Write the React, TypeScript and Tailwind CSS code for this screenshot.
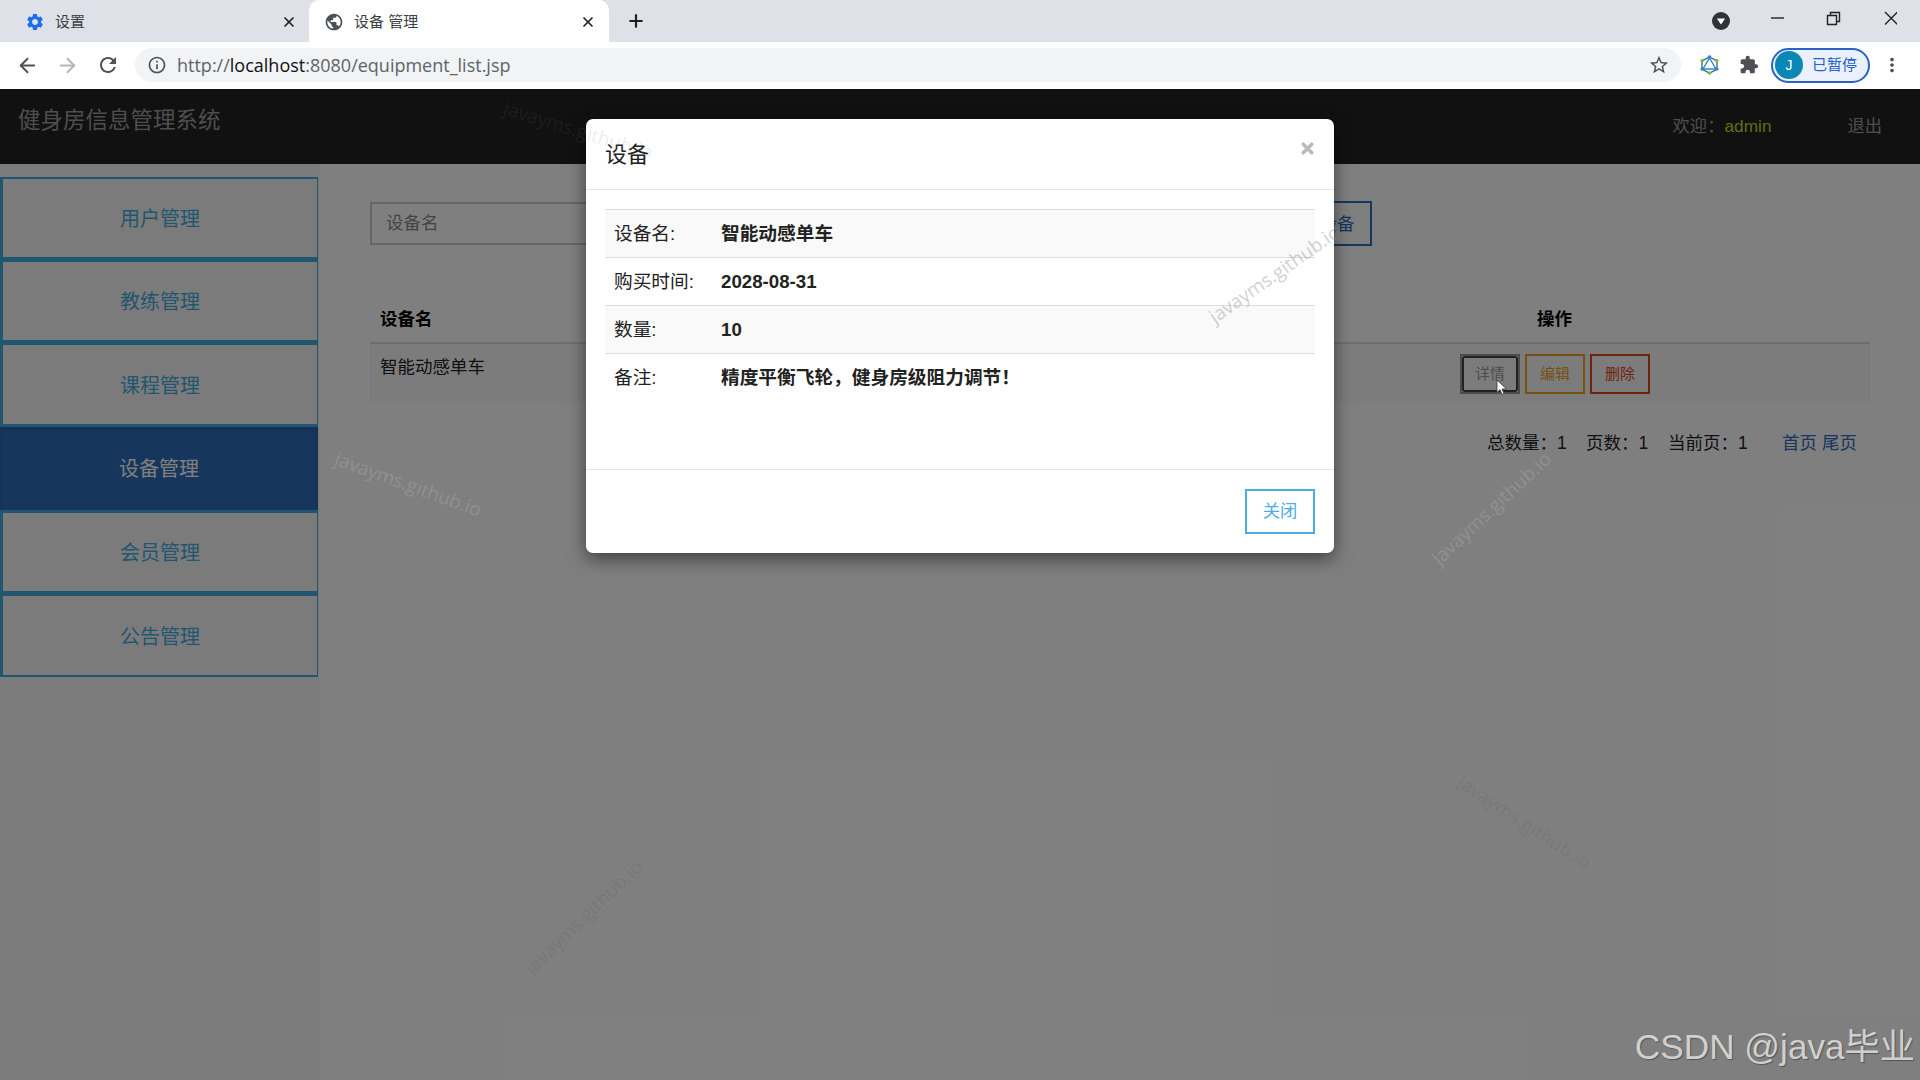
import { ReactNode } from 'react';
import { ArrowLeft, ArrowRight, Plus, X } from 'lucide-react';
import {
  MdExtension,
  MdMoreVert,
  MdOutlineInfo,
  MdOutlineStarBorder,
  MdPublic,
  MdRefresh,
  MdSettings,
} from 'react-icons/md';
import clsx from 'clsx';

const menu = [
  { label: '用户管理', className: 'h-[83px] border-t-2 border-b-3' },
  { label: '教练管理', className: 'h-[83px] border-t-2 border-b-3' },
  { label: '课程管理', className: 'h-[84px] border-t-2 border-b-3' },
  { label: '设备管理', active: true, className: 'h-[83px]' },
  { label: '会员管理', className: 'h-[84px] border-t-3 border-b-3' },
  { label: '公告管理', className: 'h-[83px] border-t-2 border-b-2' },
];

const details = [
  { label: '设备名:', value: '智能动感单车' },
  { label: '购买时间:', value: '2028-08-31' },
  { label: '数量:', value: '10' },
  { label: '备注:', value: '精度平衡飞轮，健身房级阻力调节！' },
];

const watermarks = [
  { className: 'left-[501px] top-[116px] rotate-[17deg] text-[#777]/15' },
  { className: 'left-[1197px] top-[260px] rotate-[-35deg] text-[#888]/40' },
  { className: 'left-[331px] top-[470px] rotate-[20deg] text-white/15' },
  { className: 'left-[1414px] top-[494px] rotate-[-43deg] text-white/15' },
  { className: 'left-[1447px] top-[808px] rotate-[33deg] text-black/8' },
  { className: 'left-[506px] top-[903px] rotate-[-44deg] text-black/8' },
];

function Tab({
  icon,
  title,
  active,
}: {
  icon: ReactNode;
  title: string;
  active?: boolean;
}) {
  return (
    <div
      className={clsx(
        'flex h-[42px] items-center pt-[2px] text-[15px] text-[#3c4043]',
        active
          ? 'w-[300px] rounded-t-[10px] bg-white pr-[13px] pl-4'
          : 'w-[309px] pr-[12px] pl-[26px]',
      )}
    >
      {icon}
      <span className="ml-[11px] flex-1">{title}</span>
      <X className="-mt-px h-4 w-4 text-[#202124]" strokeWidth={2.6} />
    </div>
  );
}

function ApiIcon() {
  return (
    <svg width="19" height="20" viewBox="0 0 19 20" fill="none">
      <path d="M9.5 2 17 6v8l-7.500 4.200L2 14V6z" stroke="#4a5f6e" strokeWidth="1.300" />
      <path d="M9.500 3 16 14H3z" stroke="#2f86d6" strokeWidth="1.400" />
      <g fill="#2f86d6">
        <circle cx="9.500" cy="2" r="1.800" />
        <circle cx="2.200" cy="14" r="1.800" />
        <circle cx="16.800" cy="14" r="1.800" />
      </g>
      <g fill="#6ac045">
        <circle cx="2.200" cy="5.800" r="1.800" />
        <circle cx="16.800" cy="5.800" r="1.800" />
        <circle cx="9.500" cy="18" r="1.800" />
      </g>
    </svg>
  );
}

function Browser() {
  return (
    <div className="h-[89px] bg-white">
      <div className="flex h-[42px] bg-[#dee1e7]">
        <Tab icon={<MdSettings className="-mx-px h-5 w-5 text-[#1a6ff0]" />} title="设置" />
        <Tab icon={<MdPublic className="-mx-px h-5 w-5 text-[#4d5156]" />} title="设备 管理" active />
        <Plus className="mt-[11px] ml-[17px] h-5 w-5 text-[#202124]" strokeWidth={2.6} />
        <div className="mt-[9px] ml-auto flex text-[#1f2327]">
          <svg className="mt-[3px] mr-[41px]" width="18" height="18" viewBox="0 0 18 18">
            <circle cx="9" cy="9" r="9" fill="#2f3338" />
            <path d="M4.800 6.500h8.400L9 12.500z" fill="#fff" />
          </svg>
          <svg width="126" height="20" viewBox="0 0 126 20" fill="none" stroke="currentColor" strokeWidth="1.400">
            <path d="M0 9h13" />
            <path d="M56.500 6.500h9v9h-9zM59.500 6V3.500h9v9h-2.800" />
            <path d="M114 3l12.500 12.500M126.500 3L114 15.500" />
          </svg>
          <div className="w-[23px]" />
        </div>
      </div>
      <div className="flex h-[46px] items-center text-[#4d5156]">
        <ArrowLeft className="ml-[16px] h-[23px] w-[23px]" />
        <ArrowRight className="ml-[17px] h-[23px] w-[23px] text-[#b3b5b8]" />
        <MdRefresh className="ml-[17px] h-6 w-6" />
        <div className="ml-[15px] flex h-[34px] w-[1546px] items-center rounded-full bg-[#f1f3f4] pr-[11px] pl-3">
          <MdOutlineInfo className="h-5 w-5" />
          <span className="ml-[10px] flex-1 font-['Open_Sans',sans-serif] text-[18px] text-[#5f6368]">
            http://<span className="text-[#111]">localhost</span>:8080/equipment_list.jsp
          </span>
          <MdOutlineStarBorder className="h-[22px] w-[22px]" />
        </div>
        <div className="ml-[19px]">
          <ApiIcon />
        </div>
        <MdExtension className="ml-[20px] h-5 w-5" />
        <div className="ml-3 flex h-[35px] w-[99px] items-center rounded-full border-2 border-[#2a62c8] bg-[#eaf0fc] pl-[2px]">
          <span className="flex h-[28px] w-[28px] items-center justify-center rounded-full bg-[#0b87b5] text-sm text-white">
            J
          </span>
          <span className="mt-px ml-[9px] text-[15px] text-[#2361c9]">已暂停</span>
        </div>
        <MdMoreVert className="ml-[11px] h-[22px] w-[22px]" />
      </div>
    </div>
  );
}

function Header() {
  return (
    <header className="flex h-[75px] bg-[#222] text-[#9d9d9d]">
      <div className="pt-[16px] pl-[18px] text-[22.500px] leading-8">健身房信息管理系统</div>
      <div className="mt-[22px] mr-[38px] ml-auto flex text-[17.300px] leading-[30px]">
        <span>欢迎：</span>
        <span className="w-[123px] text-[#c3d82c]">admin</span>
        <span>退出</span>
      </div>
    </header>
  );
}

function Sidebar() {
  return (
    <nav className="w-[319px] border-r border-[#eee] bg-[#f7f7f7] pt-[13px] text-center text-[20px]">
      {menu.map((item) => (
        <div
          key={item.label}
          className={clsx(
            'flex items-center justify-center',
            item.className,
            item.active
              ? 'bg-[#2d6dbb] text-white inset-shadow-[0_3px_5px_rgba(0,0,0,0.125)]'
              : 'border-r border-l-3 border-[#43ace0] pt-0.5 text-[#43ace0]',
          )}
        >
          {item.label}
        </div>
      ))}
    </nav>
  );
}

function EquipmentList() {
  return (
    <main className="flex-1 bg-white pt-[37px] pr-[50px] pl-[51px] text-[17.500px] text-[#222]">
      <div className="flex">
        <div className="mt-px flex h-[43px] w-[300px] items-center border-2 border-[#ccc] pl-[14px] text-[#888]">
          设备名
        </div>
        <button className="ml-[597px] h-[45px] w-[105px] border-2 border-[#2d6dbb] pt-px text-[#2d6dbb]">
          添加设备
        </button>
      </div>
      <div className="mt-[48px] flex h-[50px] items-center border-b-2 border-[#ddd] pt-[3px] font-bold text-black">
        <span className="ml-[10px] w-[1080px]">设备名</span>
        <span className="flex-1 pl-[77px]">操作</span>
      </div>
      <div className="flex h-[59px] bg-[#f9f9f9]">
        <span className="w-[1090px] pt-[10px] pl-[10px]">智能动感单车</span>
        <div className="flex gap-[5px] pt-[10px] text-[15px]">
          <button className="h-10 w-[60px] border-2 border-[#999] text-[#999]">
            <span className="flex h-full items-center justify-center rounded-[3px] border-2 border-[#444] pt-px">
              详情
            </span>
          </button>
          <button className="h-10 w-[60px] border-2 border-[#f0a020] pt-px text-[#f0a020]">编辑</button>
          <button className="h-10 w-[60px] border-2 border-[#dd4814] pt-px text-[#dd4814]">删除</button>
        </div>
      </div>
      <div className="mt-[27px] flex pl-[1117px] whitespace-nowrap">
        <span className="w-[99px]">总数量：1</span>
        <span className="w-[82px]">页数：1</span>
        <span className="w-[114px]">当前页：1</span>
        <a className="mr-[5px] text-[#2d6dbb]">首页</a>
        <a className="text-[#2d6dbb]">尾页</a>
      </div>
    </main>
  );
}

function DetailModal() {
  return (
    <div className="absolute inset-0 flex items-start justify-center bg-black/50 pt-[30px]">
      <div className="flex h-[434px] w-[748px] flex-col rounded-[7px] bg-white text-[#222] shadow-[0_6px_18px_rgba(0,0,0,0.5)]">
        <div className="flex h-[71px] items-center justify-between border-b border-[#e5e5e5] pr-[17px] pl-[19px]">
          <h4 className="text-[22px]">设备</h4>
          <X className="mt-[-12px] mr-px h-[17px] w-[17px] text-[#bbb]" strokeWidth={5} />
        </div>
        <div className="flex-1 px-[19px] pt-[19px] text-[18.700px]">
          {details.map((row, i) => (
            <div
              key={row.label}
              className={clsx(
                'flex h-12 items-center border-t border-[#ddd] pt-px pl-[9px]',
                i % 2 === 0 && 'bg-[#f9f9f9]',
              )}
            >
              <span className="w-[107px]">{row.label}</span>
              <b>{row.value}</b>
            </div>
          ))}
        </div>
        <div className="flex h-[84px] items-center justify-end border-t border-[#e5e5e5] pr-[19px]">
          <button className="h-[45px] w-[70px] border-2 border-[#4aade4] text-[17.300px] text-[#4aade4]">
            关闭
          </button>
        </div>
      </div>
    </div>
  );
}

export default function App() {
  return (
    <div className="relative h-[1080px] w-[1920px] overflow-hidden font-['Liberation_Sans','Noto_Sans_CJK_SC',sans-serif]">
      <Browser />
      <div className="relative flex h-[991px] flex-col">
        <Header />
        <div className="flex flex-1">
          <Sidebar />
          <EquipmentList />
        </div>
        <DetailModal />
      </div>

      {/* mouse pointer */}
      <svg className="absolute top-[379px] left-[1496px]" width="12" height="17" viewBox="0 0 12 17">
        <path d="M1 1v12.500l3-2.800 2 4.800 2-1-2-4.500h4.500z" fill="#fff" stroke="#333" strokeWidth="0.800" />
      </svg>

      {watermarks.map((mark, i) => (
        <span
          key={i}
          className={clsx(
            "absolute font-['Open_Sans',sans-serif] text-[19px] leading-7",
            mark.className,
          )}
        >
          javayms.github.io
        </span>
      ))}
      <div className="absolute right-[5px] bottom-[6px] text-[35.200px] whitespace-nowrap text-[#d0d0d0] [text-shadow:1px_1px_1px_#555]">
        CSDN @java毕业
      </div>
    </div>
  );
}
